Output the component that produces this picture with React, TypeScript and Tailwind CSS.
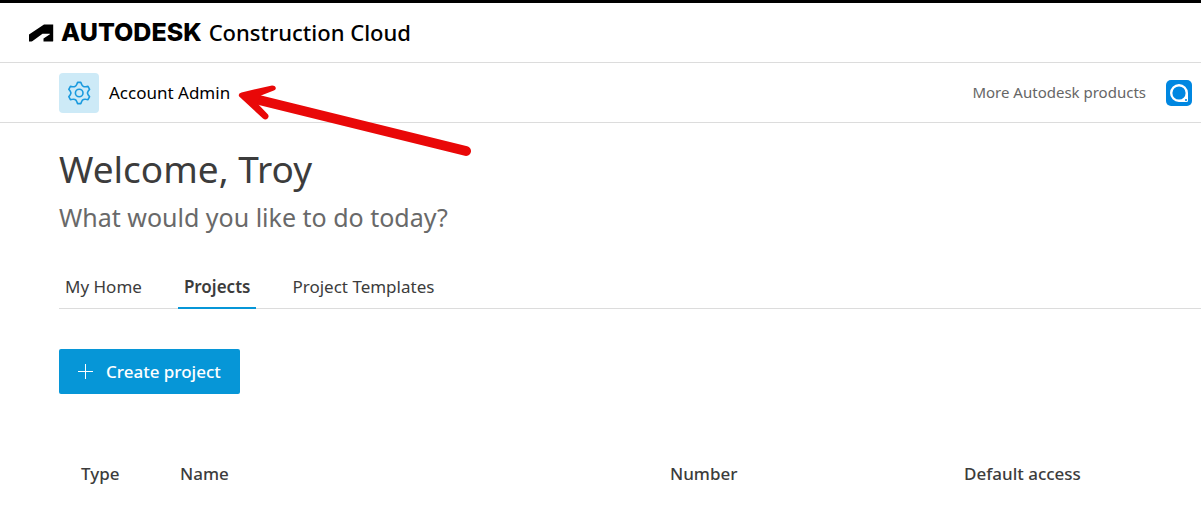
import clsx from "clsx";
import { useState } from "react";

const tabs = ["My Home", "Projects", "Project Templates"];

const columns = [
    { label: "Type", width: "w-[99px]" },
    { label: "Name", width: "w-[490px]" },
    { label: "Number", width: "w-[294px]" },
    { label: "Default access", width: "w-auto" },
];

function AutodeskMark() {
    return (
        <svg width="26" height="18" viewBox="0 0 26 18" aria-hidden="true">
            <path
                d="M1 17.4V10.6L16 .5H25.2V17Q25.2 17.4 24.8 17.4H15.5V14.4L21.6 10.6C22.1 10.3 21.9 9.8 21.5 9.8H14.5L4.6 17Q4.1 17.4 3.5 17.4Z"
                fill="#000"
            />
        </svg>
    );
}

function GearIcon() {
    return (
        <svg
            width="24"
            height="24"
            viewBox="0 0 24 24"
            fill="none"
            stroke="#1a9ade"
            strokeWidth="1.6"
            strokeLinejoin="round"
            aria-hidden="true"
        >
            <path d="M10.6 1.4h3.2l1 2.4q.5 1.2 1.7 1.7 1 .4 2.2.2l2.3-.3 1.6 2.9-1.5 2q-1.3 1.7 0 3.4l1.5 2-1.6 2.9-2.3-.3q-1.2-.2-2.2.2-1.2.5-1.7 1.7l-1 2.4h-3.2l-1-2.4q-.5-1.2-1.7-1.7-1-.4-2.2-.2l-2.3.3-1.6-2.9 1.5-2q1.3-1.7 0-3.4l-1.5-2 1.6-2.9 2.3.3q1.2.2 2.2-.2 1.2-.5 1.7-1.7z" />
            <circle cx="12.2" cy="12" r="3.8" />
        </svg>
    );
}

function ProductIcon() {
    return (
        <svg width="26" height="26" viewBox="0 0 26 26" aria-hidden="true">
            <rect width="26" height="26" rx="5" fill="#0087e1" />
            <path
                d="M13 13H22V20.5Q22 22 20.5 22H13Z"
                fill="#fff"
            />
            <circle
                cx="13"
                cy="13"
                r="7.8"
                fill="#0087e1"
                stroke="#fff"
                strokeWidth="2.4"
            />
            <circle cx="20" cy="20" r="1.1" fill="#0087e1" />
        </svg>
    );
}

function PointerArrow() {
    return (
        <svg
            className="pointer-events-none absolute top-3 left-full ml-[7px]"
            width="238"
            height="80"
            viewBox="0 0 238 80"
            fill="none"
            aria-hidden="true"
        >
            <path
                d="M20 14.5 229 66"
                stroke="#e90808"
                strokeWidth="10"
                strokeLinecap="round"
            />
            <path
                d="M4.5 7.5 35 .4Q39 .6 38.8 3.6 38.6 5 36.8 5.6L24 10.5 20 18 31 29.5Q32.4 31.6 30.6 33.4 28.4 35.4 26 33.4L2.2 11.6Q.6 8.6 4.5 7.5Z"
                fill="#e90808"
            />
        </svg>
    );
}

export default function App() {
    const [activeTab, setActiveTab] = useState("Projects");

    return (
        <div className="overflow-x-hidden bg-white font-['Noto_Sans',sans-serif] text-[#3c3c3c]">
            <header className="flex h-[63px] items-center border-t-[3px] border-b border-t-black border-b-[#dcdcdc] px-7 text-black">
                <a href="#" className="flex items-center gap-[7px]">
                    <AutodeskMark />
                    <span className="font-['Inter',sans-serif] text-[25px] font-extrabold">
                        AUTODESK
                    </span>
                    <span className="text-[22px] font-medium">
                        Construction Cloud
                    </span>
                </a>
            </header>

            <div className="flex h-[60px] items-center justify-between border-b border-[#dcdcdc] pr-[9px] pl-[59px]">
                <div className="relative">
                    <a
                        href="#"
                        className="flex items-center gap-[10px] text-[17px] text-black"
                    >
                        <span className="flex size-10 items-center justify-center rounded bg-[#cdeaf7]">
                            <GearIcon />
                        </span>
                        Account Admin
                    </a>
                    <PointerArrow />
                </div>
                <div className="flex items-center gap-5 text-[15px] text-[#666]">
                    More Autodesk products
                    <a href="#" aria-label="Autodesk product">
                        <ProductIcon />
                    </a>
                </div>
            </div>

            <main className="pt-[22px] pl-[59px]">
                <h1 className="text-[37px] leading-[48px]">Welcome, Troy</h1>
                <p className="text-[25px] leading-[48px] text-[#696969]">
                    What would you like to do today?
                </p>

                <div
                    role="tablist"
                    className="mt-[26px] flex h-[42px] gap-[30px] border-b border-[#dcdcdc]"
                >
                    {tabs.map((tab) => (
                        <button
                            key={tab}
                            role="tab"
                            aria-selected={tab === activeTab}
                            onClick={() => setActiveTab(tab)}
                            className={clsx(
                                "-mb-px border-b-2 px-[6px] text-[17px]",
                                tab === activeTab
                                    ? "border-[#0696d7] font-semibold"
                                    : "border-transparent",
                            )}
                        >
                            {tab}
                        </button>
                    ))}
                </div>

                <button className="mt-10 flex h-[45px] items-center gap-[13px] rounded-xs bg-[#0696d7] px-[19px] text-[17px] font-medium text-white">
                    <svg
                        width="15"
                        height="15"
                        viewBox="0 0 15 15"
                        stroke="currentColor"
                        aria-hidden="true"
                    >
                        <path d="M7.5 0v15M0 7.5h15" />
                    </svg>
                    Create project
                </button>

                <table className="mt-[60px] w-full table-fixed text-left text-[17px]">
                    <thead>
                        <tr className="h-10">
                            {columns.map((column) => (
                                <th
                                    key={column.label}
                                    className={clsx(
                                        "pl-[22px] font-medium",
                                        column.width,
                                    )}
                                >
                                    {column.label}
                                </th>
                            ))}
                        </tr>
                    </thead>
                </table>
            </main>
        </div>
    );
}
